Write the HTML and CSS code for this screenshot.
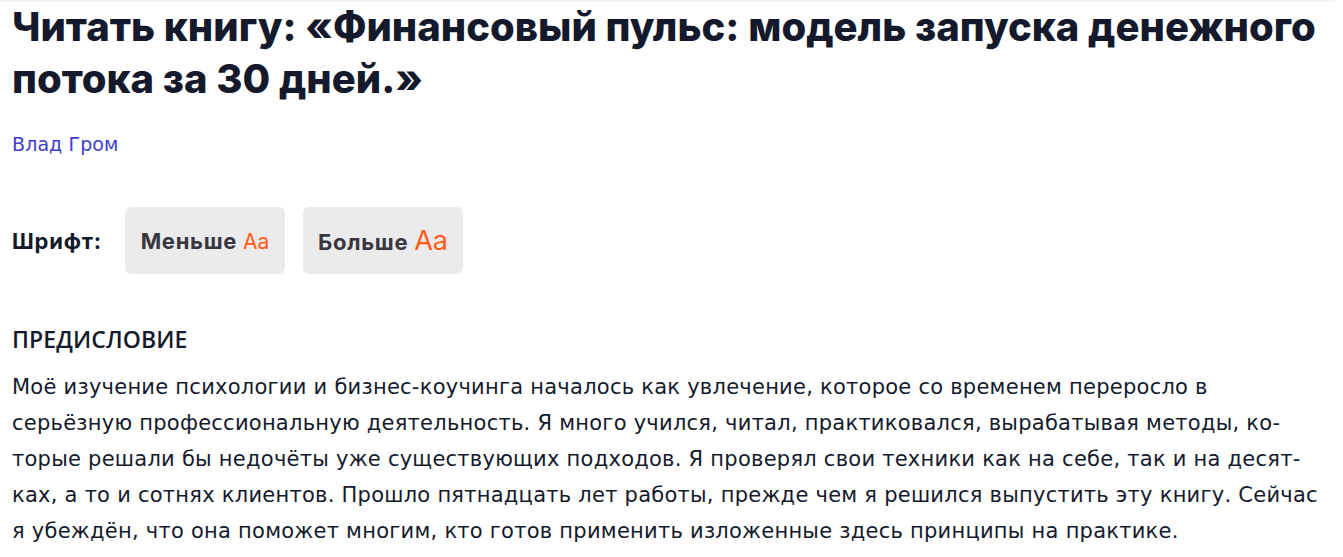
FILE: index.html
```html
<!DOCTYPE html>
<html lang="ru">

<head>
    <meta charset="UTF-8">
    <title>Читать книгу</title>
    <link rel="stylesheet" href="styles.css">
</head>

<body>
    <div class="wrapper">
        <header class="book-head">
            <h1>Читать книгу: «Финансовый пульс: модель запуска денежного потока за 30 дней.»</h1>
            <a class="author" href="#">Влад Гром</a>
        </header>

        <section class="font-size">
            <span class="font-label">Шрифт:</span>
            <button class="font-btn">Меньше <span class="aa aa-small">Aa</span></button>
            <button class="font-btn">Больше <span class="aa aa-big">Aa</span></button>
        </section>

        <article class="reader">
            <h2>ПРЕДИСЛОВИЕ</h2>
            <p>Моё изучение психологии и бизнес-коучинга началось как увлечение, которое со временем переросло в серьёзную профессиональную деятельность. Я много учился, читал, практиковался, вырабатывая методы, ко&shy;торые решали бы недочёты уже существующих подходов. Я проверял свои техники как на себе, так и на десят&shy;ках, а то и сотнях клиентов. Прошло пятнадцать лет работы, прежде чем я решился выпустить эту книгу. Сейчас я убеждён, что она поможет многим, кто готов применить изложенные здесь принципы на практике.</p>
        </article>
    </div>
</body>

</html>
```

FILE: styles.css
```css
* {
    margin: 0;
    box-sizing: border-box;
}

body {
    background: #fff;
    color: #141a2c;
    font-family: "DejaVu Sans", sans-serif;
}

.wrapper {
    padding: 0 12px;
    max-width: 1335px;
    border-top: 2px solid #f4f4f4;
}

h1 {
    margin-top: -1px;
    font-family: Inter, sans-serif;
    font-weight: 800;
    font-size: 40px;
    line-height: 52px;
}

.author {
    display: inline-block;
    margin-top: 28px;
    color: #3e3dcf;
    font-size: 19px;
    letter-spacing: 0.1px;
    text-decoration: none;
}

.font-size {
    display: flex;
    align-items: center;
    margin-top: 52px;
}

.font-label {
    font-family: Inter, sans-serif;
    font-weight: 700;
    font-size: 22px;
    letter-spacing: 0.8px;
    margin-right: 23px;
}

.font-btn {
    height: 67px;
    width: 160px;
    margin-right: 18px;
    border: none;
    border-radius: 6px;
    background: #ebebeb;
    color: #38363f;
    font-family: Inter, sans-serif;
    font-weight: 700;
    font-size: 22px;
    letter-spacing: 0.7px;
    cursor: pointer;
}

.aa {
    color: #ff5a16;
    font-weight: 400;
    letter-spacing: 0;
}

.aa-small {
    font-size: 21px;
}

.aa-big {
    font-size: 27px;
}

.reader {
    margin-top: 51px;
}

.reader h2 {
    font-family: "Open Sans", sans-serif;
    font-size: 23px;
    font-weight: 600;
    line-height: 28px;
    letter-spacing: 0.1px;
}

.reader p {
    margin-top: 16px;
    font-size: 21px;
    letter-spacing: 0.25px;
    line-height: 36px;
    hyphens: manual;
}
```
